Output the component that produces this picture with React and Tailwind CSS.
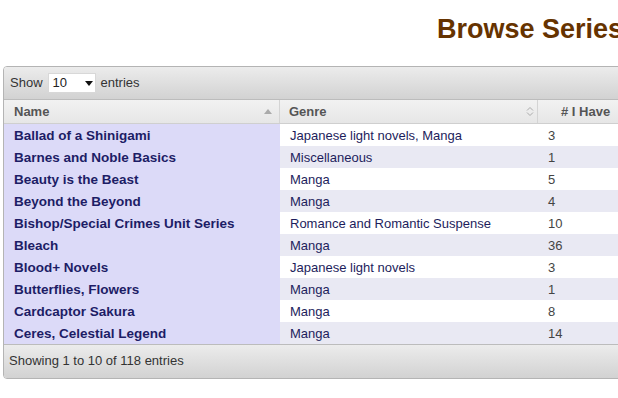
import React from "react";

const rows = [
  ["Ballad of a Shinigami", "Japanese light novels, Manga", "3"],
  ["Barnes and Noble Basics", "Miscellaneous", "1"],
  ["Beauty is the Beast", "Manga", "5"],
  ["Beyond the Beyond", "Manga", "4"],
  ["Bishop/Special Crimes Unit Series", "Romance and Romantic Suspense", "10"],
  ["Bleach", "Manga", "36"],
  ["Blood+ Novels", "Japanese light novels", "3"],
  ["Butterflies, Flowers", "Manga", "1"],
  ["Cardcaptor Sakura", "Manga", "8"],
  ["Ceres, Celestial Legend", "Manga", "14"],
];

export default function App() {
  return (
    <div
      className="w-[618px] h-[398px] overflow-hidden bg-white relative"
      style={{ fontFamily: '"Liberation Sans", Arial, sans-serif' }}
    >
      <div className="h-[66px] pl-[437px] pt-[14px] whitespace-nowrap">
        <span className="text-[27px] font-bold text-[#663300] leading-[30px]">Browse Series</span>
      </div>
      <div className="ml-[3px] w-[700px] border border-[#b4b4b4] rounded-[4px] overflow-hidden">
        <div className="h-[33px] flex items-center pl-[6px] text-[13px] text-[#333] bg-gradient-to-b from-[#ececec] to-[#d2d2d2] border-b border-[#bcbcbc]">
          <span>Show</span>
          <div className="ml-[5px] w-[48px] h-[20px] bg-white border border-[#d8d8d8] flex items-center pl-[4px] text-[#222]">
            <span>10</span>
            <svg width="8" height="5" viewBox="0 0 8 5" className="ml-[18px]">
              <path d="M0 0 L8 0 L4 5 Z" fill="#111" />
            </svg>
          </div>
          <span className="ml-[5px]">entries</span>
        </div>
        <div className="flex h-[24px] text-[13px] font-bold text-[#555] bg-gradient-to-b from-[#f2f2f2] to-[#e6e6e6] border-b border-[#cfcfcf]">
          <div className="w-[276px] flex items-center justify-between pl-[10px] pr-[7px] border-r border-[#d4d4d4]">
            <span>Name</span>
            <svg width="8" height="5" viewBox="0 0 8 5">
              <path d="M0 5 L8 5 L4 0 Z" fill="#aaa" />
            </svg>
          </div>
          <div className="w-[258px] flex items-center justify-between pl-[9px] pr-[3px] border-r border-[#d4d4d4]">
            <span>Genre</span>
            <svg width="8" height="11" viewBox="0 0 8 11">
              <path d="M1 4.5 L4 1.5 L7 4.5 M1 6.5 L4 9.5 L7 6.5" fill="none" stroke="#aaa" strokeWidth="1" />
            </svg>
          </div>
          <div className="flex-1 flex items-center pl-[23px]">
            <span>#&nbsp;I Have</span>
          </div>
        </div>
        {rows.map((r, i) => (
          <div
            key={i}
            className={
              "flex h-[22px] text-[13px] " +
              (i % 2 === 0 ? "bg-white" : "bg-[#e9e9f3]")
            }
          >
            <div className="w-[276px] bg-[#dcdaf8] pt-[2px] flex items-center pl-[10px] font-bold text-[13.5px] text-[#1d1d66] whitespace-nowrap">
              {r[0]}
            </div>
            <div className="w-[258px] pt-[2px] flex items-center pl-[10px] text-[#1d1d5c] whitespace-nowrap">
              {r[1]}
            </div>
            <div className="flex-1 pt-[2px] flex items-center pl-[10px] text-[#444]">{r[2]}</div>
          </div>
        ))}
        <div className="h-[34px] flex items-center pb-[2px] pl-[5px] text-[13px] text-[#333] bg-gradient-to-b from-[#ececec] to-[#d2d2d2] border-t border-[#bcbcbc]">
          Showing 1 to 10 of 118 entries
        </div>
      </div>
    </div>
  );
}
